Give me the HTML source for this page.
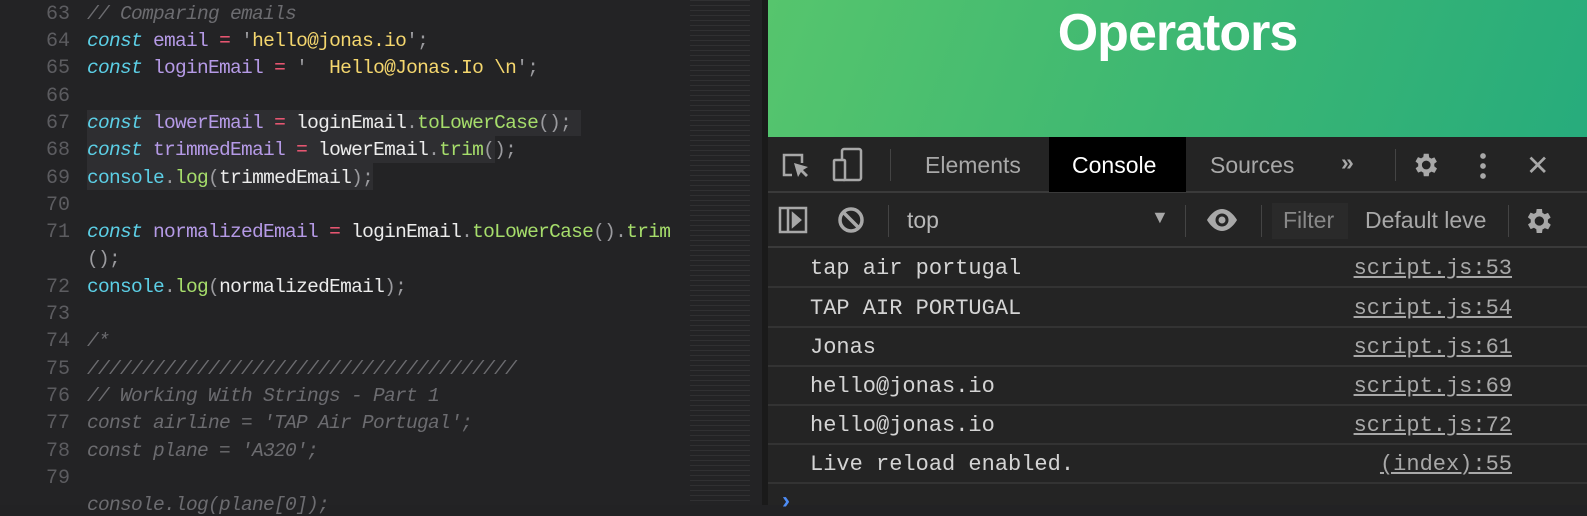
<!DOCTYPE html>
<html><head><meta charset="utf-8"><style>
*{margin:0;padding:0;box-sizing:border-box}
body{width:1587px;height:505px;overflow:hidden;background:#222224;position:relative;font-family:"Liberation Mono","DejaVu Sans Mono",monospace}
#ed{position:absolute;left:0;top:0;width:768px;height:505px;background:#232325}
.ln{position:absolute;left:0;width:70px;text-align:right;color:#5c5c60;font-size:20px}
.cd{position:absolute;left:87px;font-size:19.5px;letter-spacing:-0.7px;white-space:pre;color:#ececec}
.k{color:#5ccfe6;font-style:italic}.v{color:#b59ae6}.o{color:#ff5c7a}.s{color:#f5d76e}.f{color:#a6dd6b}.c{color:#6c6c70;font-style:italic}.p{color:#9a9a9e}.cn{color:#5ccfe6}
.hl{position:absolute;background:#2e2e31}
#mm{position:absolute;left:690px;top:0;width:60px;height:505px;background:repeating-linear-gradient(180deg,rgba(140,140,140,.12) 0 1px,transparent 1px 5px);}
#dv{position:absolute;left:762px;top:0;width:6px;height:505px;background:#1a1a1a}
#pg{position:absolute;left:768px;top:0;width:819px;height:137px;background:linear-gradient(110deg,#56c56d,#3db772 50%,#27ac7c)}
#pg h1{position:absolute;left:0;right:0;top:3px;text-align:center;color:#fff;font:bold 52px "Liberation Sans",sans-serif;letter-spacing:-1px}
#dt{position:absolute;left:768px;top:137px;width:819px;height:368px;background:#242424}
.bar{position:absolute;left:0;width:819px;border-bottom:2px solid #3a3a3a;font-family:"Liberation Sans",sans-serif;color:#a8a8a8}
.t{position:absolute;font-size:23px}
.row{position:absolute;left:0;width:819px;height:39px;border-bottom:2px solid #333;color:#d4d4d4;font-size:22px}
.row span{position:absolute;top:7px;white-space:pre}
.row .r{text-decoration:underline;color:#a8a8a8;right:75px}
.sep{position:absolute;width:1px;background:#444}
</style></head><body>
<div id="ed">
<div class="hl" style="left:87px;top:110px;width:494px;height:26px"></div>
<div class="hl" style="left:87px;top:136px;width:408px;height:27px"></div>
<div class="hl" style="left:87px;top:163px;width:286px;height:27px"></div>
<div id="mm"></div>
</div>
<div class="ln" style="top:3px">63</div><div class="cd" style="top:3px"><span class="c">// Comparing emails</span></div>
<div class="ln" style="top:30px">64</div><div class="cd" style="top:30px"><span class="k">const</span> <span class="v">email</span> <span class="o">=</span> <span class="p">'</span><span class="s">hello@jonas.io</span><span class="p">';</span></div>
<div class="ln" style="top:57px">65</div><div class="cd" style="top:57px"><span class="k">const</span> <span class="v">loginEmail</span> <span class="o">=</span> <span class="p">'</span>  <span class="s">Hello@Jonas.Io \n</span><span class="p">';</span></div>
<div class="ln" style="top:85px">66</div>
<div class="ln" style="top:112px">67</div><div class="cd" style="top:112px"><span class="k">const</span> <span class="v">lowerEmail</span> <span class="o">=</span> loginEmail<span class="p">.</span><span class="f">toLowerCase</span><span class="p">();</span></div>
<div class="ln" style="top:139px">68</div><div class="cd" style="top:139px"><span class="k">const</span> <span class="v">trimmedEmail</span> <span class="o">=</span> lowerEmail<span class="p">.</span><span class="f">trim</span><span class="p">();</span></div>
<div class="ln" style="top:167px">69</div><div class="cd" style="top:167px"><span class="cn">console</span><span class="p">.</span><span class="f">log</span><span class="p">(</span>trimmedEmail<span class="p">);</span></div>
<div class="ln" style="top:194px">70</div>
<div class="ln" style="top:221px">71</div><div class="cd" style="top:221px"><span class="k">const</span> <span class="v">normalizedEmail</span> <span class="o">=</span> loginEmail<span class="p">.</span><span class="f">toLowerCase</span><span class="p">().</span><span class="f">trim</span></div>
<div class="cd" style="top:248px"><span class="p">();</span></div>
<div class="ln" style="top:276px">72</div><div class="cd" style="top:276px"><span class="cn">console</span><span class="p">.</span><span class="f">log</span><span class="p">(</span>normalizedEmail<span class="p">);</span></div>
<div class="ln" style="top:303px">73</div>
<div class="ln" style="top:330px">74</div><div class="cd" style="top:330px"><span class="c">/*</span></div>
<div class="ln" style="top:358px">75</div><div class="cd" style="top:358px"><span class="c">///////////////////////////////////////</span></div>
<div class="ln" style="top:385px">76</div><div class="cd" style="top:385px"><span class="c">// Working With Strings - Part 1</span></div>
<div class="ln" style="top:412px">77</div><div class="cd" style="top:412px"><span class="c">const airline = 'TAP Air Portugal';</span></div>
<div class="ln" style="top:440px">78</div><div class="cd" style="top:440px"><span class="c">const plane = 'A320';</span></div>
<div class="ln" style="top:467px">79</div>
<div class="cd" style="top:494px"><span class="c">console.log(plane[0]);</span></div>
<div id="dv"></div>
<div id="pg"><h1>Operators</h1></div>
<div id="dt">
<div class="bar" style="top:0;height:56px">
 <svg style="position:absolute;left:12px;top:14px" width="30" height="30" viewBox="0 0 30 30" fill="none" stroke="#a8a8a8" stroke-width="2.5"><path d="M12 24H4V4h18v8"/><path d="M14 12l4 14 3-5 5 5 2-2-5-5 5-3z" fill="#a8a8a8" stroke="none"/></svg>
 <svg style="position:absolute;left:64px;top:10px" width="32" height="36" viewBox="0 0 32 36" fill="none" stroke="#a8a8a8" stroke-width="2.5"><rect x="10" y="2" width="19" height="31" rx="2"/><rect x="2" y="13" width="11" height="20" rx="1" fill="#242424"/></svg>
 <div class="sep" style="left:122px;top:12px;height:32px"></div>
 <div class="t" style="left:157px;top:15px">Elements</div>
 <div style="position:absolute;left:281px;top:0;width:137px;height:55px;background:#000"></div>
 <div class="t" style="left:304px;top:15px;color:#fff">Console</div>
 <div class="t" style="left:442px;top:15px">Sources</div>
 <div class="t" style="left:573px;top:12px;font-weight:bold">»</div>
 <div class="sep" style="left:627px;top:12px;height:32px"></div>
 <svg style="position:absolute;left:642px;top:13px" width="30" height="30" viewBox="0 0 24 24"><path fill="#a8a8a8" d="M19.4 13a7.5 7.5 0 000-2l2.1-1.6-2-3.5-2.5 1a7 7 0 00-1.7-1L15 3h-4l-.4 2.7a7 7 0 00-1.7 1l-2.5-1-2 3.5L6.6 11a7.5 7.5 0 000 2l-2.1 1.6 2 3.5 2.5-1a7 7 0 001.7 1L11 21h4l.4-2.7a7 7 0 001.7-1l2.5 1 2-3.5zM13 15.5a3.5 3.5 0 110-7 3.5 3.5 0 010 7z"/></svg>
 <div style="position:absolute;left:712px;top:14px;width:6px;height:28px;background:radial-gradient(circle,#a8a8a8 2.6px,transparent 3px) 0 0/6px 10px"></div>
 <div class="t" style="left:758px;top:12px;font-size:28px">✕</div>
</div>
<div class="bar" style="top:56px;height:55px">
 <svg style="position:absolute;left:10px;top:13px" width="30" height="28" viewBox="0 0 30 28" fill="none" stroke="#a8a8a8" stroke-width="2.5"><rect x="2" y="2" width="26" height="24"/><path d="M10 2v24"/><path d="M15 8l7 6-7 6z" fill="#a8a8a8"/></svg>
 <svg style="position:absolute;left:69px;top:13px" width="28" height="28" viewBox="0 0 28 28" fill="none" stroke="#a8a8a8" stroke-width="3.5"><circle cx="14" cy="14" r="11"/><path d="M6 6l16 16"/></svg>
 <div class="sep" style="left:120px;top:12px;height:32px"></div>
 <div class="t" style="left:139px;top:14px;color:#b8b8b8">top</div>
 <div class="t" style="left:383px;top:14px;font-size:18px">▼</div>
 <div class="sep" style="left:417px;top:12px;height:32px"></div>
 <svg style="position:absolute;left:436px;top:14px" width="36" height="26" viewBox="0 0 36 26"><path fill="#a8a8a8" d="M18 2C9 2 3 13 3 13s6 11 15 11 15-11 15-11S27 2 18 2z"/><circle cx="18" cy="13" r="6.5" fill="#242424"/><circle cx="18" cy="13" r="3.5" fill="#a8a8a8"/></svg>
 <div class="sep" style="left:493px;top:12px;height:32px"></div>
 <div style="position:absolute;left:504px;top:10px;width:76px;height:36px;background:#2a2a2a"></div>
 <div class="t" style="left:515px;top:14px;color:#888">Filter</div>
 <div class="t" style="left:597px;top:14px;width:122px;overflow:hidden;white-space:nowrap">Default levels</div>
 <div class="sep" style="left:740px;top:12px;height:32px"></div>
 <svg style="position:absolute;left:754px;top:12px" width="32" height="32" viewBox="0 0 24 24"><path fill="#a8a8a8" d="M19.4 13a7.5 7.5 0 000-2l2.1-1.6-2-3.5-2.5 1a7 7 0 00-1.7-1L15 3h-4l-.4 2.7a7 7 0 00-1.7 1l-2.5-1-2 3.5L6.6 11a7.5 7.5 0 000 2l-2.1 1.6 2 3.5 2.5-1a7 7 0 001.7 1L11 21h4l.4-2.7a7 7 0 001.7-1l2.5 1 2-3.5zM13 15.5a3.5 3.5 0 110-7 3.5 3.5 0 010 7z"/></svg>
</div>
<div class="row" style="top:112px"><span style="left:42px">tap air portugal</span><span class="r">script.js:53</span></div>
<div class="row" style="top:152px"><span style="left:42px">TAP AIR PORTUGAL</span><span class="r">script.js:54</span></div>
<div class="row" style="top:191px"><span style="left:42px">Jonas</span><span class="r">script.js:61</span></div>
<div class="row" style="top:230px"><span style="left:42px">hello@jonas.io</span><span class="r">script.js:69</span></div>
<div class="row" style="top:269px"><span style="left:42px">hello@jonas.io</span><span class="r">script.js:72</span></div>
<div class="row" style="top:308px"><span style="left:42px">Live reload enabled.</span><span class="r">(index):55</span></div>
<div style="position:absolute;left:14px;top:350px;color:#4d8cf5;font:bold 24px 'Liberation Sans',sans-serif">›</div>
</div>
</body></html>
